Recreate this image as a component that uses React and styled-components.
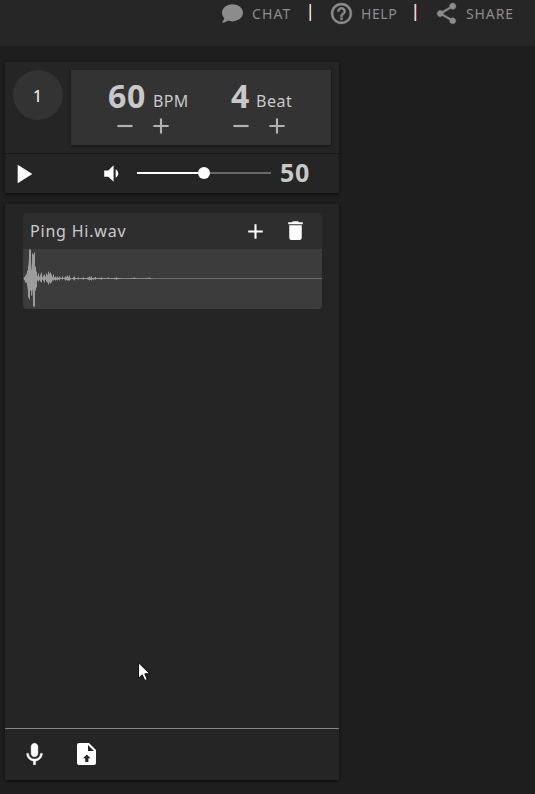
import React from "react";
import styled, { createGlobalStyle } from "styled-components";
import { FaComment } from "react-icons/fa";
import { MdHelpOutline, MdShare, MdPlayArrow, MdVolumeDown, MdAdd, MdRemove, MdDelete } from "react-icons/md";

const GlobalStyle = createGlobalStyle`
  * { box-sizing: border-box; }
  body {
    margin: 0;
    background: #1e1e1e;
    color: #c8c8c8;
    font-family: "Noto Sans", "Open Sans", sans-serif;
    overflow: hidden;
  }
  svg { display: block; flex: none; }
`;

const Page = styled.div`
  position: relative;
  height: 794px;
  width: 535px;
  background: #1e1e1e;
`;
const Header = styled.header`
  height: 46px;
  background: #262626;
  display: flex;
  align-items: flex-start;
  padding-left: 222px;
  color: #8c8c8c;
`;
const NavItem = styled.a`
  display: flex;
  align-items: center;
  height: 26px;
  width: ${(p) => p.$width}px;
  gap: ${(p) => p.$gap}px;
  font-size: 14px;
  letter-spacing: ${(p) => p.$spacing}px;
  white-space: nowrap;
`;
const NavLabel = styled.span`
  line-height: 20px;
  padding-top: 2px;
`;
const HelpIcon = styled(MdHelpOutline)`
  path[fill="none"] {
    stroke: none;
  }
  path:last-child {
    stroke: currentColor;
    stroke-width: 0.4px;
  }
`;
const ShareIcon = styled(MdShare)`
  path:last-child {
    stroke: currentColor;
    stroke-width: 0.4px;
  }
  path[fill="none"] {
    stroke: none;
  }
`;
const Separator = styled.span`
  width: 3px;
  height: 17px;
  margin-top: 4px;
  margin-right: ${(p) => p.$after}px;
  background: linear-gradient(90deg, #8b8b8b 0 1px, #d6d6d6 1px 2px, ${(p) => p.$edge} 2px 3px);
`;
const Panel = styled.section`
  width: 334px;
  margin-left: 5px;
  background: #252525;
  box-shadow: 0 1px 3px rgba(0, 0, 0, 0.65);
`;
const Metronome = styled(Panel)`
  margin-top: 16px;
  height: 131px;
`;
const Settings = styled.div`
  display: flex;
  height: 92px;
  padding: 8px;
  border-bottom: 1px solid #191919;
`;
const BeatCircle = styled.div`
  width: 50px;
  height: 50px;
  margin-right: 8px;
  border-radius: 50%;
  background: #333;
  color: #fff;
  font-size: 16px;
  line-height: 52px;
  text-align: center;
  padding-right: 1px;
`;
const Controls = styled.div`
  display: flex;
  width: 260px;
  height: 75px;
  background: #333;
  box-shadow: 0 1px 3px rgba(0, 0, 0, 0.55);
`;
const Control = styled.div`
  width: ${(p) => p.$width}px;
  padding-left: ${(p) => p.$inset}px;
`;
const Reading = styled.div`
  display: flex;
  align-items: flex-start;
  height: 44px;
  white-space: nowrap;
`;
const Value = styled.span`
  font-size: 32px;
  font-weight: 700;
  line-height: 52px;
  letter-spacing: 0.7px;
  width: ${(p) => p.$width}px;
`;
const Unit = styled.span`
  font-size: 16px;
  line-height: 62px;
  letter-spacing: ${(p) => p.$spacing}px;
`;
const Steps = styled.div`
  display: flex;
  gap: 10px;
  margin-left: ${(p) => p.$shift}px;
  margin-top: -1px;
  color: #b2b2b2;
`;
const Transport = styled.div`
  display: flex;
  align-items: center;
  height: 39px;
  padding-left: 2px;
  color: #fff;
`;
const VolumeIcon = styled.div`
  margin-left: 60px;
  width: 38px;
`;
const Slider = styled.div`
  display: flex;
  align-items: center;
  width: 134px;
  height: 12px;
  margin-top: -1px;
`;
const Track = styled.span`
  height: 2px;
  flex: 1;
  background: ${(p) => p.$color};
`;
const Thumb = styled.span`
  width: 12px;
  height: 12px;
  border-radius: 50%;
  background: #fff;
`;
const Volume = styled.span`
  margin-left: 9px;
  color: #c8c8c8;
  font-size: 25px;
  font-weight: 700;
  line-height: 36px;
  padding-bottom: 3px;
  letter-spacing: 0.8px;
`;
const Library = styled(Panel)`
  display: flex;
  flex-direction: column;
  height: 576px;
  margin-top: 11px;
`;
const Samples = styled.div`
  flex: 1;
  padding: 9px 17px 0 18px;
`;
const Sample = styled.article`
  height: 96px;
  border-radius: 4px;
  background: #2e2e2e;
  overflow: hidden;
`;
const SampleHeader = styled.div`
  display: flex;
  align-items: center;
  height: 36px;
  padding-left: 7px;
  color: #fff;
`;
const SampleName = styled.span`
  width: 213px;
  color: #cacaca;
  font-size: 16px;
  letter-spacing: 0.8px;
  line-height: 36px;
`;
const DeleteButton = styled.span`
  margin-left: 15px;
  padding-bottom: 1px;
`;
const Wave = styled.div`
  height: 60px;
  background: #3c3c3c;
`;
const Footer = styled.footer`
  display: flex;
  height: 52px;
  border-top: 1px solid #858585;
  padding: 12px 0 0 16px;
  gap: 29px;
  color: #fff;
`;
const UploadIcon = styled.svg`
  margin-top: 2px;
`;
const Cursor = styled.svg`
  position: absolute;
  left: 138px;
  top: 662px;
`;

const peaks = [
  [0, 1, 1], [1, 3, 4], [2, 4, 4], [3, 8, 7], [4, 12, 19], [5, 29, 21], [6, 29, 12],
  [7, 8, 17], [8, 25, 11], [9, 24, 28], [10, 26, 28], [11, 12, 12], [12, 7, 9],
  [13, 2, 2], [14, 5, 3], [15, 1, 1], [16, 4, 3], [17, 6, 4], [18, 1, 1], [19, 3, 2],
  [20, 4, 4], [21, 1, 1], [22, 5, 3], [23, 3, 4], [24, 7, 6], [25, 5, 4], [26, 6, 5],
  [27, 4, 4], [28, 1, 2], [29, 4, 2], [30, 1, 1], [31, 2, 2], [32, 0.5, 1], [33, 2, 2],
  [34, 0.5, 0.5], [35, 2, 2], [37, 0.5, 0.5], [38, 2, 1], [40, 0.5, 0.5], [41, 2, 2],
  [42, 1, 1], [43, 3, 2], [44, 1, 2], [45, 3, 2], [46, 0.5, 1], [48, 0.5, 0.5],
  [50, 2, 2], [52, 0.5, 0.5], [54, 1, 1], [56, 0.5, 0.5], [59, 1, 1], [62, 0.5, 0.5],
  [65, 2, 2], [66, 0.5, 1], [67, 2, 2], [69, 0.5, 1], [71, 1.5, 1], [73, 0.5, 0.5],
  [77, 1, 1], [80, 0.5, 0.5], [84, 1, 0.5], [87, 0.5, 0.5], [92, 1, 1],
  [97, 0.5, 0.5], [103, 0.5, 0], [110, 1, 0.5], [114, 0.5, 0], [125, 1, 0], [130, 0, 0],
];
// One vertical bar per sample column keeps the peaks crisp.
const barPath = peaks.map(([x, up, down]) => `M${x + 1.5} ${29.5 - up}V${29.5 + down}`).join("");
const bodyPath = `M${peaks.map(([x, up]) => `${x + 1} ${29.5 - up * 0.7}`).join("L")}L${[...peaks]
  .reverse()
  .map(([x, , down]) => `${x + 1} ${29.5 + down * 0.7}`)
  .join("L")}Z`;

function Waveform() {
  return (
    <svg width="299" height="60" viewBox="0 0 299 60">
      <path d="M0 29.5H299" stroke="#696969" />
      <path d={bodyPath} fill="#9c9c9c" />
      <path d={barPath} stroke="#9c9c9c" />
    </svg>
  );
}

function MicIcon() {
  return (
    <svg width="27" height="27" viewBox="0 0 24 24">
      <path
        fill="#fff"
        stroke="#fff"
        strokeWidth="0.4"
        d="M12 14c1.66 0 3-1.34 3-3V5c0-1.66-1.34-3-3-3S9 3.34 9 5v6c0 1.66 1.34 3 3 3zm5.3-3c0 3-2.54 5.1-5.3 5.1S6.7 14 6.7 11H5c0 3.41 2.72 6.23 6 6.72V21h2v-3.28c3.28-.48 6-3.3 6-6.72h-1.7z"
      />
    </svg>
  );
}

function UploadFileIcon() {
  return (
    <UploadIcon width="19" height="22" viewBox="0 0 19 22">
      <path
        fill="#fff"
        fillRule="evenodd"
        d="M2 0H12L19 7V20Q19 22 17 22H2Q0 22 0 20V2Q0 0 2 0ZM11 2V8H17ZM9.8 11.5L6 15.3H8.2V19H11.4V15.3H13.6Z"
      />
    </UploadIcon>
  );
}

export default function App() {
  return (
    <Page>
      <GlobalStyle />
      <Header>
        <NavItem $width={87} $gap={9} $spacing={1.1}>
          <FaComment size={21} />
          <NavLabel>CHAT</NavLabel>
        </NavItem>
        <Separator $after={17} $edge="#5a302e" />
        <NavItem $width={85} $gap={7} $spacing={0.6}>
          <HelpIcon size={25} />
          <NavLabel>HELP</NavLabel>
        </NavItem>
        <Separator $after={17} $edge="#a03430" />
        <NavItem $width={90} $gap={7} $spacing={0.9}>
          <ShareIcon size={25} />
          <NavLabel>SHARE</NavLabel>
        </NavItem>
      </Header>
      <Metronome>
        <Settings>
          <BeatCircle>1</BeatCircle>
          <Controls>
            <Control $width={160} $inset={37}>
              <Reading>
                <Value $width={45}>60</Value>
                <Unit $spacing={0.3}>BPM</Unit>
              </Reading>
              <Steps $shift={4}>
                <MdRemove size={26} />
                <MdAdd size={26} />
              </Steps>
            </Control>
            <Control $width={100} $inset={0}>
              <Reading>
                <Value $width={25}>4</Value>
                <Unit $spacing={0.5}>Beat</Unit>
              </Reading>
              <Steps $shift={-3}>
                <MdRemove size={26} />
                <MdAdd size={26} />
              </Steps>
            </Control>
          </Controls>
        </Settings>
        <Transport>
          <MdPlayArrow size={32} />
          <VolumeIcon>
            <MdVolumeDown size={25} />
          </VolumeIcon>
          <Slider>
            <Track $color="#fff" />
            <Thumb />
            <Track $color="#666" />
          </Slider>
          <Volume>50</Volume>
        </Transport>
      </Metronome>
      <Library>
        <Samples>
          <Sample>
            <SampleHeader>
              <SampleName>Ping Hi.wav</SampleName>
              <MdAdd size={25} />
              <DeleteButton>
                <MdDelete size={25} />
              </DeleteButton>
            </SampleHeader>
            <Wave>
              <Waveform />
            </Wave>
          </Sample>
        </Samples>
        <Footer>
          <MicIcon />
          <UploadFileIcon />
        </Footer>
      </Library>
      <Cursor width="13" height="20" viewBox="0 0 13 20">
        <path d="M.5.8V16.2L4.2 12.8L6.8 18.6L9.3 17.5L6.8 11.8H11.8Z" fill="#fff" stroke="#111" />
      </Cursor>
    </Page>
  );
}
